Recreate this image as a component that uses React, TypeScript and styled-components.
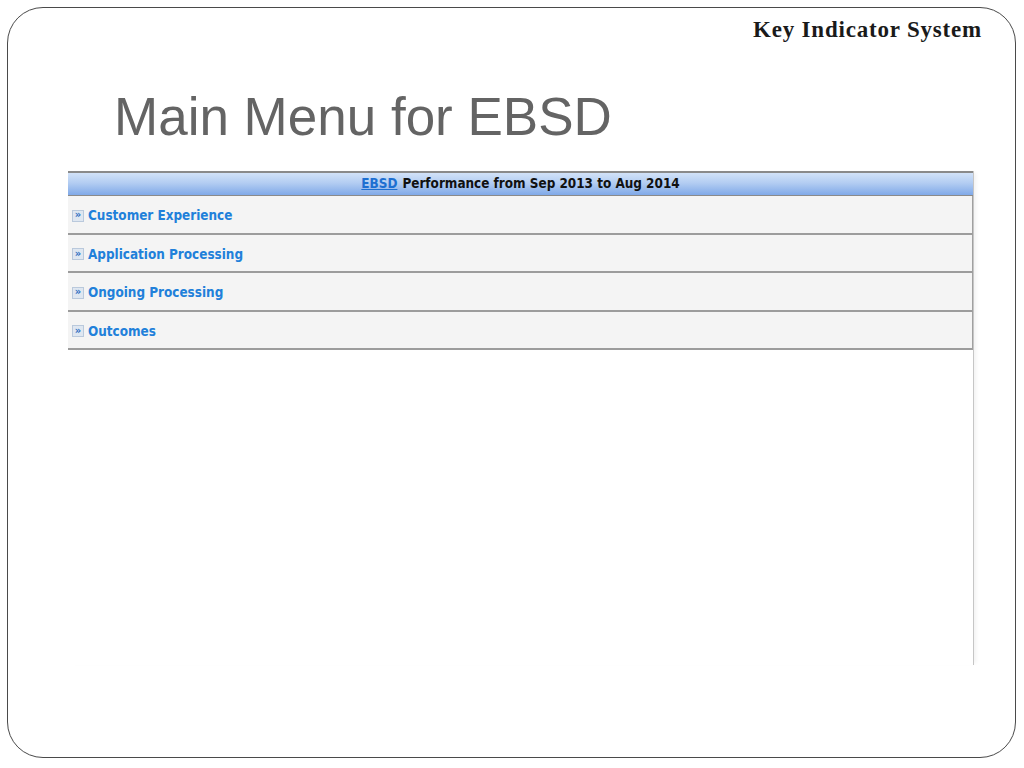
import React from "react";
import styled, { createGlobalStyle } from "styled-components";

const GlobalStyle = createGlobalStyle`
  html, body { margin: 0; padding: 0; background: #ffffff; }
  body { width: 1024px; height: 768px; overflow: hidden; }
  * { box-sizing: border-box; }
`;

const Page = styled.div`
  width: 1024px;
  height: 768px;
  padding: 7px 8px 10px 7px;
  background: #ffffff;
`;

const Frame = styled.div`
  width: 1009px;
  height: 751px;
  border: 1px solid #4a4a4a;
  border-radius: 36px;
  display: flex;
  flex-direction: column;
`;

const TopBar = styled.div`
  display: flex;
  justify-content: flex-end;
  padding: 10px 33px 0 0;
  height: 33px;
`;

const SystemName = styled.div`
  font-family: "Liberation Serif", "Times New Roman", serif;
  font-weight: bold;
  font-size: 23px;
  line-height: 23px;
  letter-spacing: 0.8px;
  color: #1a1a1a;
`;

const Title = styled.h1`
  margin: 50px 0 0 106px;
  font-family: "Liberation Sans", Arial, sans-serif;
  font-weight: normal;
  font-size: 53px;
  line-height: 52px;
  color: #646464;
`;

const Panel = styled.div`
  margin: 28px 0 0 60px;
  width: 912px;
  height: 494px;
  display: flex;
  flex-direction: column;
  font-family: "DejaVu Sans Condensed", "DejaVu Sans", Verdana, sans-serif;
  font-weight: bold;
  font-size: 13.4px;
`;

const PanelBody = styled.div`
  width: 906px;
  flex: 1;
  display: flex;
  flex-direction: column;
  border-right: 1px solid #c6c6c6;
  box-shadow: 4px 0 4px -2px #f2f2f2;
`;

const HeaderBar = styled.div`
  height: 25px;
  border-top: 2px solid #8a8a8a;
  border-bottom: 1px solid #8a8a8a;
  background: linear-gradient(#d2e2f8 0%, #b3cdf2 45%, #80a9e8 100%);
  display: flex;
  align-items: center;
  justify-content: center;
  color: #111111;
  padding: 0 0 1px 0;
`;

const HeaderLink = styled.span`
  color: #1d6fd1;
  text-decoration: underline;
  margin-right: 5px;
`;

const Row = styled.div`
  height: 38.5px;
  background: #f4f4f4;
  border-bottom: 2px solid #9c9c9c;
  border-right: 1px solid #a0a0a0;
  display: flex;
  align-items: center;
  padding: 3px 0 0 4px;
  color: #2180da;
`;

const Expander = styled.span`
  width: 12px;
  height: 12px;
  margin-right: 4px;
  background: #dfe7f1;
  border: 1px solid #bac9dc;
  display: flex;
  align-items: center;
  justify-content: center;
  font-family: "DejaVu Sans", sans-serif;
  font-size: 10px;
  line-height: 1;
  color: #2f6fc1;
  padding-bottom: 1px;
`;

const items = [
  "Customer Experience",
  "Application Processing",
  "Ongoing Processing",
  "Outcomes",
];

export default function App() {
  return (
    <>
      <GlobalStyle />
      <Page>
        <Frame>
          <TopBar>
            <SystemName>Key Indicator System</SystemName>
          </TopBar>
          <Title>Main Menu for EBSD</Title>
          <Panel>
            <PanelBody>
              <HeaderBar>
                <HeaderLink>EBSD</HeaderLink>
                Performance from Sep 2013 to Aug 2014
              </HeaderBar>
              {items.map((t) => (
                <Row key={t}>
                  <Expander>»</Expander>
                  {t}
                </Row>
              ))}
            </PanelBody>
          </Panel>
        </Frame>
      </Page>
    </>
  );
}
